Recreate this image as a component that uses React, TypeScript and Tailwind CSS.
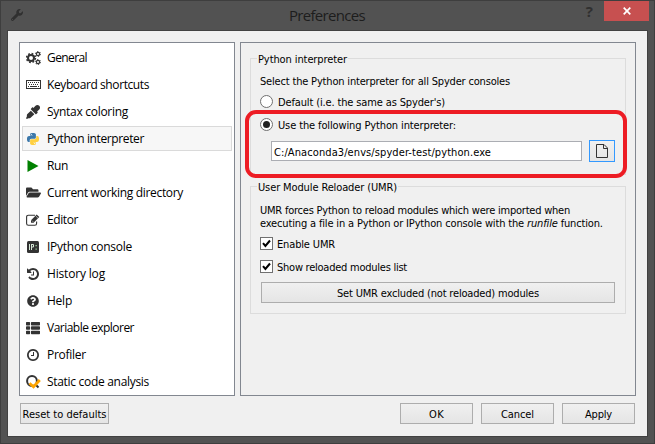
import React, { useLayoutEffect, useRef, useState } from "react";
import { FaEyeDropper, FaFolderOpen, FaQuestionCircle, FaThList, FaWrench } from "react-icons/fa";

/* Single line of text whose tracking is adjusted to fill a given width. */
function Label({ w, children, className = "translate-y-px" }: { w: number; children: React.ReactNode; className?: string }) {
  const ref = useRef<HTMLSpanElement>(null);
  const [spacing, setSpacing] = useState(0);
  useLayoutEffect(() => {
    const el = ref.current;
    if (!el) return;
    const n = (el.textContent || "").length;
    setSpacing((w - el.getBoundingClientRect().width) / n);
  }, [w]);
  return (
    <span ref={ref} className={"inline-block shrink-0 whitespace-nowrap " + className} style={{ letterSpacing: spacing }}>
      {children}
    </span>
  );
}

const PY =
  "M14.25.18l.9.2.73.26.59.3.45.32.34.34.25.34.16.33.1.3.04.26.02.2-.01.13V8.5l-.05.63-.13.55-.21.46-.26.38-.3.31-.33.25-.35.19-.35.14-.33.1-.3.07-.26.04-.21.02H8.77l-.69.05-.59.14-.5.22-.41.27-.33.32-.27.35-.2.36-.15.37-.1.35-.07.32-.04.27-.02.21v3.06H3.17l-.21-.03-.28-.07-.32-.12-.35-.18-.36-.26-.36-.36-.35-.46-.32-.59-.28-.73-.21-.88-.14-1.05-.05-1.23.06-1.22.16-1.04.24-.87.32-.71.36-.57.4-.44.42-.33.42-.24.4-.16.36-.1.32-.05.24-.01h.16l.06.01h8.16v-.83H6.18l-.01-2.75-.02-.37.05-.34.11-.31.17-.28.25-.26.31-.23.38-.2.44-.18.51-.15.58-.12.64-.1.71-.06.77-.04.84-.02 1.27.05zm-6.3 1.98l-.23.33-.08.41.08.41.23.34.33.22.41.09.41-.09.33-.22.23-.34.08-.41-.08-.41-.23-.33-.33-.22-.41-.09-.41.09z";

const PythonIcon = () => (
  <svg width="12" height="12" viewBox="0 0 24 24">
    <path d={PY} fill="#3c78aa" />
    <path d={PY} fill="#ffd040" transform="rotate(180 12 12)" />
  </svg>
);

const GearsIcon = () => (
  <svg width="15" height="14" viewBox="0 0 15 14" fill="none" stroke="#333">
    <circle cx="5" cy="7" r="3" strokeWidth="2" />
    <circle cx="5" cy="7" r="4.4" strokeWidth="1.6" strokeDasharray="1.73 1.73" />
    <circle cx="12" cy="3" r="1.6" strokeWidth="1.2" />
    <circle cx="12" cy="3" r="2.5" strokeWidth="1" strokeDasharray="1.31 1.31" />
    <circle cx="12" cy="11" r="1.6" strokeWidth="1.2" />
    <circle cx="12" cy="11" r="2.5" strokeWidth="1" strokeDasharray="1.31 1.31" />
  </svg>
);

const KeyboardIcon = () => (
  <svg width="15" height="9" viewBox="0 0 15 9" fill="none" stroke="#333" shapeRendering="crispEdges">
    <rect x=".5" y=".5" width="14" height="8" />
    <path d="M2 2.5h11M3 4.5h10" strokeDasharray="1 1" />
    <path d="M2 6.5h1M4 6.5h7M12 6.5h1" />
  </svg>
);

const RunIcon = () => (
  <svg width="12" height="12" viewBox="0 0 12 12"><path d="M.5 0L11.5 6L.5 12Z" fill="#008000" /></svg>
);

const EditIcon = () => (
  <svg width="14" height="12" viewBox="0 0 14 12" fill="none">
    <path d="M9 1.2H2.4Q.6 1.2 .6 3V9.4Q.6 11.2 2.4 11.2H8.8Q10.6 11.2 10.6 9.4V7.6" stroke="#333" strokeWidth="1.1" />
    <path d="M5 6.2L10.7 .5L13.3 3.1L7.6 8.8H5Z" fill="#333" />
    <path d="M6 6.6L7.2 7.8M9.7 1.9L12 4.2" stroke="#fff" strokeWidth=".6" />
  </svg>
);

const IPythonIcon = () => (
  <svg width="12" height="12" viewBox="0 0 12 12">
    <rect width="12" height="12" rx="1.5" fill="#333" />
    <path d="M2.5 3v6M4.5 3v6M5 3.5h1.5v2.5H5" stroke="#d5e6d5" fill="none" />
    <path d="M8.5 4h1.3v1.3H8.5zM8.5 7.5h1.3v1.3H8.5z" fill="#9ccf9c" />
  </svg>
);

const HistoryIcon = () => (
  <svg width="12" height="12" viewBox="0 -128 1536 1536" fill="#333">
    <path d="M1536 640q0 156-61 298t-164 245-245 164-298 61q-172 0-327-72.5t-264-204.5q-7-10-6.5-22.5t8.5-20.5l137-138q10-9 25-9 16 2 23 12 73 95 179 147t225 52q104 0 198.5-40.5t163.5-109.5 109.5-163.5 40.5-198.5-40.5-198.5-109.5-163.5-163.5-109.5-198.5-40.5q-98 0-188 35.5t-160 101.5l137 138q31 30 14 69-17 40-59 40h-448q-26 0-45-19t-19-45v-448q0-42 40-59 39-17 69 14l130 129q107-101 244.5-156.5t284.5-55.5q156 0 298 61t245 164 164 245 61 298zm-640-288v448q0 14-9 23t-23 9h-320q-14 0-23-9t-9-23v-64q0-14 9-23t23-9h224v-352q0-14 9-23t23-9h64q14 0 23 9t9 23z" />
  </svg>
);

const ClockIcon = () => (
  <svg width="12" height="12" viewBox="0 0 1536 1536" fill="#333">
    <path d="M896 416v448q0 14-9 23t-23 9h-320q-14 0-23-9t-9-23v-64q0-14 9-23t23-9h224v-352q0-14 9-23t23-9h64q14 0 23 9t9 23zm416 352q0-148-73-273t-198-198-273-73-273 73-198 198-73 273 73 273 198 198 273 73 273-73 198-198 73-273zm224 0q0 209-103 385.5t-279.5 279.5-385.5 103-385.5-103-279.5-279.5-103-385.5 103-385.5 279.5-279.5 385.5-103 385.5 103 279.5 279.5 103 385.5z" />
  </svg>
);

const AnalysisIcon = () => (
  <svg width="15" height="14" viewBox="0 0 15 14" fill="none">
    <circle cx="6" cy="6" r="4.9" stroke="#333" strokeWidth="2" />
    <path d="M9.5 9.5L12.5 12.5" stroke="#333" strokeWidth="2" />
    <path d="M3.5 8.2L7.5 11.7L13.8 5" stroke="#ffa500" strokeWidth="2.8" />
  </svg>
);

const items: { label: string; w: number; icon: React.ReactNode }[] = [
  { label: "General", w: 40, icon: <GearsIcon /> },
  { label: "Keyboard shortcuts", w: 102, icon: <KeyboardIcon /> },
  { label: "Syntax coloring", w: 81, icon: <FaEyeDropper size={14} /> },
  { label: "Python interpreter", w: 97, icon: <PythonIcon /> },
  { label: "Run", w: 21, icon: <RunIcon /> },
  { label: "Current working directory", w: 136, icon: <FaFolderOpen size={15} /> },
  { label: "Editor", w: 31, icon: <EditIcon /> },
  { label: "IPython console", w: 85, icon: <IPythonIcon /> },
  { label: "History log", w: 58, icon: <HistoryIcon /> },
  { label: "Help", w: 25, icon: <FaQuestionCircle size={12} /> },
  { label: "Variable explorer", w: 87, icon: <FaThList size={14} /> },
  { label: "Profiler", w: 39, icon: <ClockIcon /> },
  { label: "Static code analysis", w: 102, icon: <AnalysisIcon /> },
];

function Button({ children, className = "" }: { children: React.ReactNode; className?: string }) {
  return (
    <button className={"flex h-[21px] shrink-0 items-center justify-center border border-[#adadad] bg-gradient-to-b from-[#f0f0f0] to-[#e5e5e5] " + className}>
      {children}
    </button>
  );
}

const Radio = ({ checked = false }: { checked?: boolean }) => (
  <span className="flex size-[13px] shrink-0 items-center justify-center rounded-full border border-[#707070] bg-white">
    {checked && <span className="size-[7px] rounded-full bg-[#212121]" />}
  </span>
);

const Check = () => (
  <span className="flex size-[13px] shrink-0 items-center justify-center border border-[#707070] bg-white">
    <svg width="11" height="11" viewBox="0 0 11 11"><path d="M2 5.2L4.4 8L9 2.5" fill="none" stroke="#000" strokeWidth="2" /></svg>
  </span>
);

export default function App() {
  return (
    <div className="flex h-[444px] w-[655px] flex-col border border-[#3e3e3e] bg-[#525252] font-['DejaVu_Sans_Condensed','DejaVu_Sans',sans-serif] text-[11px] leading-[13px] text-black">
      <header className="flex h-[29px] shrink-0 items-start pr-[5px] pl-[10px]">
        <FaWrench size={12} className="mt-2 shrink-0 text-[#303030]" />
        <div className="flex h-[29px] flex-1 items-center pl-[266px] font-['Open_Sans','Noto_Sans',sans-serif] text-[15px] text-[#1d1d1d]">
          <Label w={76} className="">Preferences</Label>
        </div>
        <div className="mt-px mr-[11px] font-['Open_Sans',sans-serif] text-[15px] leading-[18px] font-bold text-[#303030]">?</div>
        <button className="flex h-5 w-[45px] items-center justify-center bg-[#c75050]">
          <svg width="8" height="8" viewBox="0 0 8 8"><path d="M.7.7l6.6 6.6M7.3.7L.7 7.3" stroke="#fff" strokeWidth="1.7" /></svg>
        </button>
      </header>

      <main className="mx-1.5 mb-1.5 flex flex-1 flex-col border border-[#414141] bg-[#f0f0f0] px-[11px] pt-[11px]">
        <div className="flex h-[354px] gap-[5px]">
          <nav className="flex w-[216px] flex-col gap-0.5 border border-[#828790] bg-white pt-0.5 pl-0.5">
            {items.map((it, i) => (
              <div
                key={it.label}
                className={"flex h-[25px] w-[210px] shrink-0 items-center border font-['Open_Sans','Noto_Sans',sans-serif] text-[12px] leading-4 " + (i === 3 ? "border-[#dadada] bg-[#f7f7f7]" : "border-transparent")}
              >
                <span className="flex w-5 shrink-0 items-center justify-center text-[#333]">{it.icon}</span>
                <Label w={it.w} className="ml-1">{it.label}</Label>
              </div>
            ))}
          </nav>

          <section className="w-[396px] border border-[#828790] pt-[9px] pl-[9px]">
            <fieldset className="flex h-[123px] w-[376px] flex-col border border-[#dcdcdc] pl-[9px]">
              <legend className="-ml-[3px] h-[13px] px-px"><Label w={89}>Python interpreter</Label></legend>
              <div className="mt-[9px] flex h-[13px]"><Label w={250}>Select the Python interpreter for all Spyder consoles</Label></div>
              <label className="mt-[7px] flex h-[14px] items-center gap-[5px]"><Radio /><Label w={167}>Default (i.e. the same as Spyder's)</Label></label>
              <label className="mt-[9px] flex h-[14px] items-center gap-[5px]"><Radio checked /><Label w={178}>Use the following Python interpreter:</Label></label>
              <div className="mt-[9px] flex items-center gap-[7px] pl-[11px]">
                <div className="flex h-5 w-[311px] items-center border border-[#abadb3] bg-white pl-0.5"><Label w={217}>C:/Anaconda3/envs/spyder-test/python.exe</Label></div>
                <button className="flex h-[22px] w-[26px] items-center justify-center border border-[#3399ff] bg-gradient-to-b from-[#f0f0f0] to-[#e5e5e5]">
                  <svg width="12" height="14" viewBox="0 0 12 14" fill="none" stroke="#333"><path d="M.5.5H8L11.5 4V13.5H.5ZM7.5.5V4.5H11.5" /></svg>
                </button>
              </div>
            </fieldset>

            <fieldset className="mt-[5px] flex h-[134px] w-[376px] flex-col border border-[#dcdcdc] pl-[9px]">
              <legend className="-ml-[3px] h-[13px] px-px"><Label w={139}>User Module Reloader (UMR)</Label></legend>
              <div className="mt-[10px] flex h-[13px]"><Label w={310}>UMR forces Python to reload modules which were imported when</Label></div>
              <div className="flex h-[13px]"><Label w={343}>executing a file in a Python or IPython console with the <i>runfile</i> function.</Label></div>
              <label className="mt-[8px] flex items-center gap-1"><Check /><Label w={58}>Enable UMR</Label></label>
              <label className="mt-[10px] flex items-center gap-1"><Check /><Label w={130}>Show reloaded modules list</Label></label>
              <Button className="mt-[9px] ml-px w-[354px]"><Label w={202}>Set UMR excluded (not reloaded) modules</Label></Button>
            </fieldset>
          </section>
        </div>

        <footer className="mt-[7px] flex pr-px pl-px">
          <Button className="mr-auto w-[89px]"><Label w={84}>Reset to defaults</Label></Button>
          <div className="flex gap-2">
            <Button className="w-[73px]"><Label w={15}>OK</Label></Button>
            <Button className="w-[73px]"><Label w={33}>Cancel</Label></Button>
            <Button className="w-[73px]"><Label w={27}>Apply</Label></Button>
          </div>
        </footer>
      </main>

      {/* Highlight drawn over the interpreter field */}
      <div className="pointer-events-none absolute top-[110px] left-[245px] h-[68px] w-[382px] rounded-[11px] border-4 border-[#ed1c24]" />
    </div>
  );
}
